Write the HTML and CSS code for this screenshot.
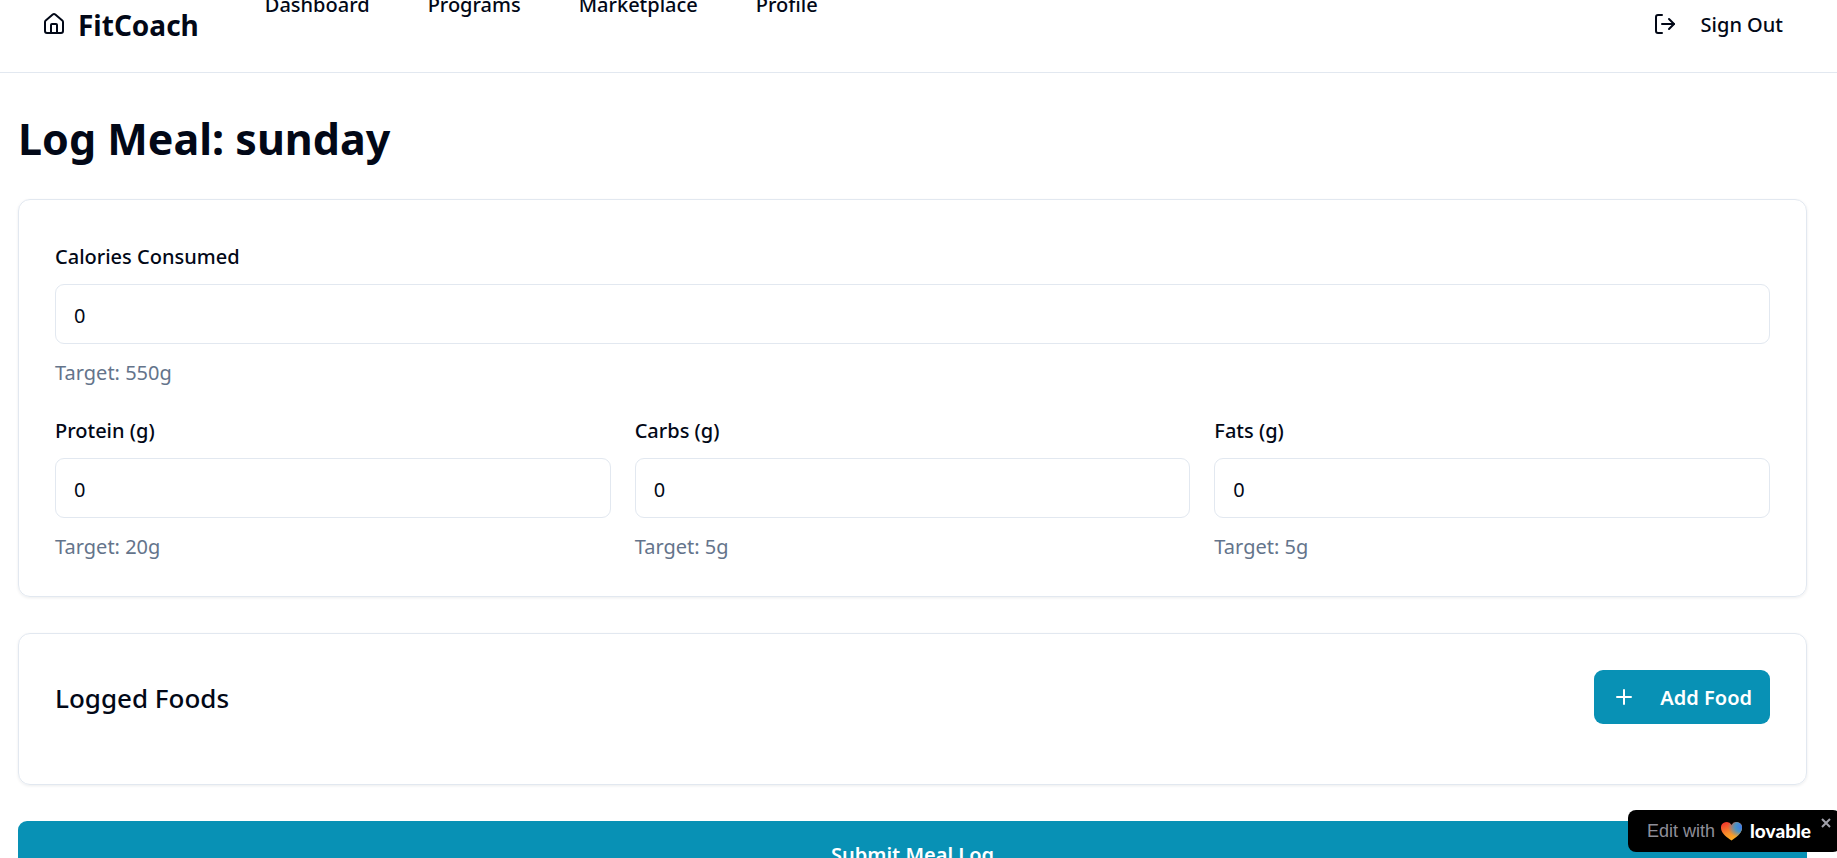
FILE: index.html
```html
<!DOCTYPE html>
<html lang="en">
<head>
<meta charset="utf-8">
<meta name="viewport" content="width=device-width, initial-scale=1">
<title>FitCoach</title>
<link rel="stylesheet" href="styles.css">
</head>
<body>
<header class="header">
  <a class="brand" href="#">
    <svg class="icon" viewBox="0 0 24 24" aria-hidden="true"><path d="M15 21v-8a1 1 0 0 0-1-1h-4a1 1 0 0 0-1 1v8"/><path d="M3 10a2 2 0 0 1 .709-1.528l7-5.999a2 2 0 0 1 2.582 0l7 5.999A2 2 0 0 1 21 10v9a2 2 0 0 1-2 2H5a2 2 0 0 1-2-2z"/></svg>
    <span>FitCoach</span>
  </a>
  <nav class="nav">
    <a href="#">Dashboard</a>
    <a href="#">Programs</a>
    <a href="#">Marketplace</a>
    <a href="#">Profile</a>
  </nav>
  <button class="sign-out" type="button">
    <svg class="icon" viewBox="0 0 24 24" aria-hidden="true"><path d="M9 21H5a2 2 0 0 1-2-2V5a2 2 0 0 1 2-2h4"/><path d="m16 17 5-5-5-5"/><path d="M21 12H9"/></svg>
    <span>Sign Out</span>
  </button>
</header>
<main class="page">
  <h1 class="title">Log Meal: sunday</h1>
  <form class="form">
    <section class="card">
      <div class="field">
        <label for="calories">Calories Consumed</label>
        <input id="calories" type="text" inputmode="numeric" value="0">
        <p class="target">Target: 550g</p>
      </div>
      <div class="macros">
        <div class="field">
          <label for="protein">Protein (g)</label>
          <input id="protein" type="text" inputmode="numeric" value="0">
          <p class="target">Target: 20g</p>
        </div>
        <div class="field">
          <label for="carbs">Carbs (g)</label>
          <input id="carbs" type="text" inputmode="numeric" value="0">
          <p class="target">Target: 5g</p>
        </div>
        <div class="field">
          <label for="fats">Fats (g)</label>
          <input id="fats" type="text" inputmode="numeric" value="0">
          <p class="target">Target: 5g</p>
        </div>
      </div>
    </section>
    <section class="card foods">
      <h2 class="foods-title">Logged Foods</h2>
      <button class="button" type="button">
        <svg class="icon" viewBox="0 0 24 24" aria-hidden="true"><path d="M5 12h14M12 5v14"/></svg>
        <span>Add Food</span>
      </button>
    </section>
    <button class="button submit" type="submit">Submit Meal Log</button>
  </form>
</main>
<aside class="badge">
  <a class="badge-link" href="#">
    <span>Edit with</span>
    <svg class="heart" viewBox="0 0 21 19" aria-hidden="true">
      <defs>
        <linearGradient id="warm" x1="0" y1="0" x2="0.5" y2="1"><stop offset="0.1" stop-color="#f0392c"/><stop offset="0.6" stop-color="#f58a2b"/><stop offset="1" stop-color="#fbb024"/></linearGradient>
        <radialGradient id="cool" cx="0.95" cy="0.25" r="0.62"><stop offset="0" stop-color="#3d7be8"/><stop offset="0.45" stop-color="#4c93c0"/><stop offset="1" stop-color="#4c93c0" stop-opacity="0"/></radialGradient>
      </defs>
      <path fill="url(#warm)" d="M10.500 18.500C7 16 0 11.500 0 6a5.600 5.600 0 0 1 10.500-3A5.600 5.600 0 0 1 21 6c0 5.500-7 10-10.500 12.500z"/>
      <path fill="url(#cool)" d="M10.500 18.500C7 16 0 11.500 0 6a5.600 5.600 0 0 1 10.500-3A5.600 5.600 0 0 1 21 6c0 5.500-7 10-10.500 12.500z"/>
    </svg>
    <strong class="badge-name">lovable</strong>
  </a>
  <button class="badge-close" type="button" aria-label="Close">
    <svg viewBox="0 0 10 10" aria-hidden="true"><path d="M1 1l8 8M9 1l-8 8"/></svg>
  </button>
</aside>
</body>
</html>
```

FILE: styles.css
```css
* { box-sizing: border-box; }

body {
  margin: 0;
  background: #fff;
  color: #020817;
  font-family: "Noto Sans", "Open Sans", sans-serif;
  font-size: 20px;
  line-height: 30px;
}

h1, h2, p { margin: 0; }
a { color: inherit; text-decoration: none; }

button, input {
  font: inherit;
  color: inherit;
}

button {
  border: 0;
  background: none;
  padding: 0;
  cursor: pointer;
}

.icon {
  width: 24px;
  height: 24px;
  flex: none;
  fill: none;
  stroke: currentColor;
  stroke-width: 2;
  stroke-linecap: round;
  stroke-linejoin: round;
}

.header {
  display: flex;
  align-items: center;
  height: 97px;
  margin-top: -24px;
  padding: 0 54px 0 42px;
  border-bottom: 1px solid #e2e8f0;
}

.brand {
  display: flex;
  align-items: center;
  gap: 12px;
  font-size: 28px;
  font-weight: 700;
}

.brand span, .sign-out span { padding-top: 2px; }

.nav {
  display: flex;
  align-self: flex-start;
  gap: 58px;
  margin-left: 66px;
  line-height: 58px;
  font-weight: 500;
}

.sign-out {
  display: flex;
  align-items: center;
  gap: 24px;
  margin-left: auto;
  font-weight: 500;
}

.page { padding: 36px 30px 36px 18px; }

.title {
  font-size: 43px;
  line-height: 60px;
  font-weight: 700;
}

.form {
  display: grid;
  gap: 36px;
  margin-top: 30px;
}

.card {
  padding: 36px 36px 32px;
  border: 1px solid #e2e8f0;
  border-radius: 12px;
  box-shadow: 0 1px 3px rgba(15, 23, 42, 0.08);
}

.field {
  display: flex;
  flex-direction: column;
}

.field label {
  line-height: 42px;
  font-weight: 500;
}

.field input {
  width: 100%;
  height: 60px;
  margin: 6px 0 12px;
  padding: 2px 18px 0;
  border: 1px solid #e2e8f0;
  border-radius: 9px;
  background: #fff;
  outline: none;
}

.target {
  line-height: 34px;
  color: #64748b;
}

.macros {
  display: grid;
  grid-template-columns: repeat(3, 1fr);
  gap: 24px;
  margin-top: 20px;
}

.foods {
  display: flex;
  align-items: center;
  justify-content: space-between;
  padding-bottom: 60px;
}

.foods-title {
  padding-top: 2px;
  font-size: 26px;
  font-weight: 500;
}

.button {
  display: flex;
  align-items: center;
  justify-content: center;
  gap: 24px;
  height: 54px;
  padding: 0 18px;
  border-radius: 9px;
  background: #0891b5;
  color: #fff;
  font-weight: 600;
}

.button span { padding-top: 2px; }

.submit { height: 66px; padding-top: 2px; }

.badge {
  position: fixed;
  right: -4px;
  bottom: 6px;
  display: flex;
  height: 42px;
  padding: 0 10px 0 19px;
  border-radius: 8px;
  background: #000;
}

.badge-link {
  display: flex;
  align-items: center;
  gap: 6px;
  color: #8e8e98;
  font-family: "Liberation Sans", Arial, sans-serif;
  font-size: 18px;
}

.heart {
  width: 21px;
  height: 19px;
}

.badge-name {
  margin-left: 2px;
  color: #fff;
  font-family: Lato, sans-serif;
  font-size: 19px;
  font-weight: 900;
}

.badge-close {
  align-self: flex-start;
  margin: 8px 0 0 10px;
  line-height: 0;
}

.badge-close svg {
  width: 10px;
  height: 10px;
  stroke: #a1a1aa;
  stroke-width: 2;
}
```
